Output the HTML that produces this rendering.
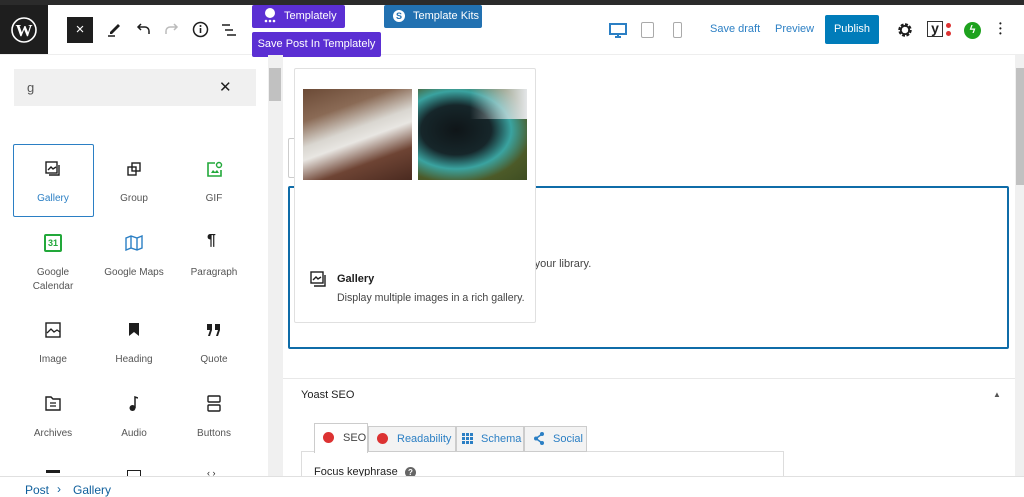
<!DOCTYPE html>
<html><head><meta charset="utf-8"><style>
*{box-sizing:border-box;margin:0;padding:0}
body{width:1024px;height:496px;overflow:hidden;background:#fff;font-family:"Liberation Sans",sans-serif;position:relative;color:#1e1e1e}
.a{position:absolute}
.lbl{position:absolute;font-size:10px;color:#555;text-align:center;width:80px;line-height:14px}
svg{display:block}
</style></head><body>
<div class="a" style="left:0;top:0;width:1024px;height:5px;background:#2b2b2b"></div>
<div class="a" style="left:0;top:5px;width:1024px;height:50px;background:#fff;border-bottom:1px solid #eee"></div>
<div class="a" style="left:0;top:5px;width:48px;height:49px;background:#1e1e1e"></div>
<svg class="a" style="left:11px;top:17px" width="26" height="26" viewBox="0 0 26 26"><circle cx="13" cy="13" r="12" fill="none" stroke="#fff" stroke-width="1.6"/><text x="13" y="19" font-size="17" font-family="Liberation Serif" font-weight="bold" fill="#fff" text-anchor="middle">W</text></svg>
<div class="a" style="left:67px;top:17px;width:26px;height:26px;background:#1e1e1e;color:#fff;font-size:15px;text-align:center;line-height:26px">×</div>
<svg class="a" style="left:105px;top:20px" width="18" height="18" viewBox="0 0 18 18"><path d="M5 12L13 4l2 2-8 8H5z" fill="#1e1e1e"/><path d="M3 16h7" stroke="#1e1e1e" stroke-width="1.5"/></svg>
<svg class="a" style="left:135px;top:22px" width="16" height="14" viewBox="0 0 16 14"><path d="M14 12V9a4 4 0 0 0-4-4H3M6 2L3 5l3 3" fill="none" stroke="#1e1e1e" stroke-width="1.5"/></svg>
<svg class="a" style="left:164px;top:22px" width="16" height="14" viewBox="0 0 16 14"><path d="M2 12V9a4 4 0 0 1 4-4h7M10 2l3 3-3 3" fill="none" stroke="#bbb" stroke-width="1.5"/></svg>
<svg class="a" style="left:192px;top:21px" width="17" height="17" viewBox="0 0 17 17"><circle cx="8.5" cy="8.5" r="7" fill="none" stroke="#1e1e1e" stroke-width="1.5"/><path d="M8.5 7v5" stroke="#1e1e1e" stroke-width="1.6"/><circle cx="8.5" cy="5" r="1" fill="#1e1e1e"/></svg>
<svg class="a" style="left:221px;top:23px" width="16" height="14" viewBox="0 0 16 14"><path d="M1 2h8M4 7h8M6 12h9" stroke="#1e1e1e" stroke-width="1.5"/></svg>
<div class="a" style="left:252px;top:5px;width:93px;height:23px;background:#5b2fd3;border-radius:2px;color:#fff;font-size:11px;line-height:23px;padding-left:32px">Templately</div>
<svg class="a" style="left:263px;top:7px" width="14" height="16" viewBox="0 0 14 16"><circle cx="7" cy="6" r="5" fill="#fff"/><circle cx="3" cy="14" r="1.3" fill="#fff"/><circle cx="7" cy="14" r="1.3" fill="#fff"/><circle cx="11" cy="14" r="1.3" fill="#fff"/></svg>
<div class="a" style="left:252px;top:32px;width:129px;height:25px;background:#5b2fd3;border-radius:2px;color:#fff;font-size:11px;line-height:25px;text-align:center">Save Post In Templately</div>
<div class="a" style="left:384px;top:5px;width:98px;height:23px;background:#2271b1;border-radius:2px;color:#fff;font-size:11px;line-height:23px;padding-left:29px">Template Kits</div>
<div class="a" style="left:393px;top:10px;width:12px;height:12px;border-radius:50%;background:#fff;color:#2271b1;font-size:9px;line-height:12px;text-align:center;font-weight:bold">S</div>
<svg class="a" style="left:609px;top:23px" width="18" height="15" viewBox="0 0 18 15"><rect x="1" y="1" width="16" height="10" fill="none" stroke="#2b7fc4" stroke-width="2"/><path d="M6 14h6M9 11v3" stroke="#2b7fc4" stroke-width="2"/></svg>
<div class="a" style="left:641px;top:22px;width:13px;height:16px;border:1.5px solid #aaa;border-radius:2px"></div>
<div class="a" style="left:673px;top:22px;width:9px;height:16px;border:1.5px solid #aaa;border-radius:2px"></div>
<div class="a" style="left:710px;top:23px;font-size:11px;color:#2b7fc4">Save draft</div>
<div class="a" style="left:775px;top:23px;font-size:11px;color:#2b7fc4">Preview</div>
<div class="a" style="left:825px;top:15px;width:54px;height:29px;background:#007cba;border-radius:2px;color:#fff;font-size:11px;line-height:29px;text-align:center">Publish</div>
<svg class="a" style="left:897px;top:22px" width="16" height="16" viewBox="0 0 16 16"><circle cx="8" cy="8" r="5" fill="none" stroke="#1e1e1e" stroke-width="3.5" stroke-dasharray="2.6 1.3"/><circle cx="8" cy="8" r="4.2" fill="none" stroke="#1e1e1e" stroke-width="1.8"/></svg>
<div class="a" style="left:927px;top:21px;width:16px;height:16px;border:1.5px solid #333;font-size:14px;line-height:13px;text-align:center;font-weight:bold">y</div>
<div class="a" style="left:946px;top:23px;width:5px;height:5px;border-radius:50%;background:#dc3232"></div>
<div class="a" style="left:946px;top:31px;width:5px;height:5px;border-radius:50%;background:#dc3232"></div>
<div class="a" style="left:964px;top:22px;width:17px;height:17px;border-radius:50%;background:#1ea21e;color:#fff;font-size:11px;line-height:17px;text-align:center;font-weight:bold">ϟ</div>
<div class="a" style="left:999px;top:21px;width:3px;line-height:5px;font-size:8px">•<br>•<br>•</div>

<!-- sidebar -->
<div class="a" style="left:268px;top:55px;width:15px;height:421px;background:#f0f0f0"></div>
<div class="a" style="left:269px;top:68px;width:12px;height:33px;background:#c1c1c1"></div>
<div class="a" style="left:14px;top:69px;width:242px;height:37px;background:#f0f0f0"></div>
<div class="a" style="left:27px;top:80px;font-size:13px;color:#555">g</div>
<div class="a" style="left:219px;top:78px;font-size:15px;color:#1e1e1e">✕</div>
<div class="a" style="left:13px;top:144px;width:81px;height:73px;border:1.5px solid #2b7fc4;border-radius:2px"></div>

<svg class="a" style="left:45px;top:161px" width="16" height="16" viewBox="0 0 16 16"><rect x="1" y="1" width="11" height="11" fill="none" stroke="#1e1e1e" stroke-width="1.4"/><path d="M3 9l3-3 2 2 3-2M14 4v10H4" fill="none" stroke="#1e1e1e" stroke-width="1.4"/></svg>
<div class="lbl" style="left:13px;top:192px;color:#2b7fc4">Gallery</div>
<svg class="a" style="left:127px;top:162px" width="14" height="14" viewBox="0 0 14 14"><rect x="1" y="5" width="8" height="8" fill="none" stroke="#1e1e1e" stroke-width="1.4"/><rect x="5" y="1" width="8" height="8" fill="none" stroke="#1e1e1e" stroke-width="1.4"/></svg>
<div class="lbl" style="left:94px;top:192px">Group</div>
<svg class="a" style="left:206px;top:161px" width="17" height="17" viewBox="0 0 17 17"><path d="M9 2H2v13h13V9" fill="none" stroke="#22a83a" stroke-width="1.6"/><circle cx="13" cy="4" r="2.5" fill="none" stroke="#22a83a" stroke-width="1.4"/><path d="M5 12l2-3 2 2 2-2 2 3z" fill="#22a83a"/></svg>
<div class="lbl" style="left:174px;top:192px">GIF</div>

<div class="a" style="left:44px;top:234px;width:18px;height:18px;border:2px solid #22a83a;border-radius:2px;color:#22a83a;font-size:9px;font-weight:bold;text-align:center;line-height:15px">31</div>
<div class="lbl" style="left:13px;top:266px">Google<br>Calendar</div>
<svg class="a" style="left:125px;top:235px" width="18" height="16" viewBox="0 0 18 16"><path d="M1 3l5-2 6 2 5-2v12l-5 2-6-2-5 2zM6 1v12M12 3v12" fill="none" stroke="#2b7fc4" stroke-width="1.4"/></svg>
<div class="lbl" style="left:94px;top:266px">Google Maps</div>
<div class="a" style="left:207px;top:232px;font-size:16px;font-weight:bold">¶</div>
<div class="lbl" style="left:174px;top:266px">Paragraph</div>

<svg class="a" style="left:45px;top:322px" width="16" height="16" viewBox="0 0 16 16"><rect x="1" y="1" width="14" height="14" fill="none" stroke="#1e1e1e" stroke-width="1.4"/><path d="M2 11l4-4 3 3 3-2 3 2" fill="none" stroke="#1e1e1e" stroke-width="1.3"/></svg>
<div class="lbl" style="left:13px;top:353px">Image</div>
<svg class="a" style="left:129px;top:323px" width="10" height="13" viewBox="0 0 10 13"><path d="M0 0h10v13l-5-4-5 4z" fill="#1e1e1e"/></svg>
<div class="lbl" style="left:94px;top:353px">Heading</div>
<svg class="a" style="left:207px;top:324px" width="14" height="12" viewBox="0 0 14 12"><path d="M0 0h5v6l-2 6H1l2-6H0zM8 0h5v6l-2 6H9l2-6H8z" fill="#1e1e1e"/></svg>
<div class="lbl" style="left:174px;top:353px">Quote</div>

<svg class="a" style="left:45px;top:396px" width="16" height="15" viewBox="0 0 16 15"><path d="M1 1h5l2 2h7v11H1z" fill="none" stroke="#1e1e1e" stroke-width="1.4"/><path d="M5 7h6M5 10h6" stroke="#1e1e1e" stroke-width="1.3"/></svg>
<div class="lbl" style="left:13px;top:427px">Archives</div>
<svg class="a" style="left:129px;top:396px" width="9" height="15" viewBox="0 0 9 15"><path d="M6 12V1l3 1" fill="none" stroke="#1e1e1e" stroke-width="1.5"/><circle cx="3.5" cy="12" r="3" fill="#1e1e1e"/></svg>
<div class="lbl" style="left:94px;top:427px">Audio</div>
<svg class="a" style="left:207px;top:395px" width="14" height="17" viewBox="0 0 14 17"><rect x="1" y="1" width="12" height="6" rx="1" fill="none" stroke="#1e1e1e" stroke-width="1.4"/><rect x="1" y="10" width="12" height="6" rx="1" fill="none" stroke="#1e1e1e" stroke-width="1.4"/></svg>
<div class="lbl" style="left:174px;top:427px">Buttons</div>
<div class="a" style="left:46px;top:470px;width:14px;height:6px;border-top:3px solid #1e1e1e"></div>
<div class="a" style="left:127px;top:470px;width:14px;height:6px;border:1.5px solid #1e1e1e;border-bottom:none"></div>
<div class="a" style="left:207px;top:468px;font-size:9px">‹ ›</div>

<!-- content -->
<div class="a" style="left:1015px;top:55px;width:9px;height:421px;background:#f0f0f0"></div>
<div class="a" style="left:1016px;top:68px;width:8px;height:117px;background:#c1c1c1"></div>
<div class="a" style="left:288px;top:138px;width:40px;height:40px;border:1px solid #ccc;border-radius:2px"></div>
<div class="a" style="left:288px;top:186px;width:721px;height:163px;border:2px solid #0f6ca8;border-radius:2px"></div>
<div class="a" style="left:523px;top:258px;font-size:11px;color:#444">in your library.</div>
<div class="a" style="left:283px;top:378px;width:732px;height:1px;background:#e8e8e8"></div>
<div class="a" style="left:301px;top:389px;font-size:11px;color:#1e1e1e">Yoast SEO</div>
<div class="a" style="left:993px;top:390px;font-size:8px;color:#555">▲</div>
<div class="a" style="left:301px;top:451px;width:483px;height:30px;border:1px solid #ddd"></div>
<div class="a" style="left:314px;top:423px;width:54px;height:30px;background:#fff;border:1px solid #ccc;border-bottom:none"></div>
<div class="a" style="left:323px;top:432px;width:11px;height:11px;border-radius:50%;background:#dc3232"></div>
<div class="a" style="left:343px;top:432px;font-size:11px;color:#444">SEO</div>
<div class="a" style="left:368px;top:426px;width:88px;height:26px;background:#f3f3f3;border:1px solid #ccc"></div>
<div class="a" style="left:377px;top:433px;width:11px;height:11px;border-radius:50%;background:#dc3232"></div>
<div class="a" style="left:397px;top:433px;font-size:11px;color:#2b7fc4">Readability</div>
<div class="a" style="left:456px;top:426px;width:68px;height:26px;background:#f3f3f3;border:1px solid #ccc"></div>
<svg class="a" style="left:462px;top:433px" width="12" height="11" viewBox="0 0 12 11"><g fill="#2b7fc4"><rect x="0" y="0" width="3" height="3"/><rect x="4" y="0" width="3" height="3"/><rect x="8" y="0" width="3" height="3"/><rect x="0" y="4" width="3" height="3"/><rect x="4" y="4" width="3" height="3"/><rect x="8" y="4" width="3" height="3"/><rect x="0" y="8" width="3" height="3"/><rect x="4" y="8" width="3" height="3"/><rect x="8" y="8" width="3" height="3"/></g></svg>
<div class="a" style="left:481px;top:433px;font-size:11px;color:#2b7fc4">Schema</div>
<div class="a" style="left:524px;top:426px;width:63px;height:26px;background:#f3f3f3;border:1px solid #ccc"></div>
<svg class="a" style="left:533px;top:432px" width="12" height="13" viewBox="0 0 12 13"><path d="M9 2L3 6.5 9 11" stroke="#2b7fc4" stroke-width="1.5" fill="none"/><circle cx="9" cy="2" r="2" fill="#2b7fc4"/><circle cx="3" cy="6.5" r="2" fill="#2b7fc4"/><circle cx="9" cy="11" r="2" fill="#2b7fc4"/></svg>
<div class="a" style="left:553px;top:433px;font-size:11px;color:#2b7fc4">Social</div>
<div class="a" style="left:314px;top:466px;font-size:11px;color:#1e1e1e">Focus keyphrase</div>
<div class="a" style="left:405px;top:467px;width:11px;height:11px;border-radius:50%;background:#666;color:#fff;font-size:8px;text-align:center;line-height:11px;font-weight:bold">?</div>

<!-- popover -->
<div class="a" style="left:294px;top:68px;width:242px;height:255px;background:#fff;border:1px solid #e0e0e0;border-radius:2px"></div>
<div class="a" style="left:303px;top:89px;width:109px;height:91px;background:linear-gradient(160deg,#6b4a36 0%,#8a6a55 25%,#d9d6d0 45%,#e8e6e2 55%,#6e4434 75%,#4a2a20 100%)"></div>
<div class="a" style="left:418px;top:89px;width:109px;height:91px;background:radial-gradient(ellipse at 35% 45%,#0f1518 0%,#16262a 35%,#3aa3a0 55%,#4c5a28 75%,#3e4d22 100%)"></div>
<div class="a" style="left:470px;top:89px;width:57px;height:30px;background:linear-gradient(90deg,rgba(200,205,210,0),#e4e6e8)"></div>
<svg class="a" style="left:310px;top:271px" width="17" height="16" viewBox="0 0 17 16"><rect x="1" y="1" width="12" height="11" fill="none" stroke="#1e1e1e" stroke-width="1.4"/><path d="M3 9l3-3 2 2 3-2M15 4v11H4" fill="none" stroke="#1e1e1e" stroke-width="1.4"/></svg>
<div class="a" style="left:337px;top:273px;font-size:11px;font-weight:bold;color:#1e1e1e">Gallery</div>
<div class="a" style="left:337px;top:292px;font-size:10.6px;color:#444">Display multiple images in a rich gallery.</div>

<!-- footer -->
<div class="a" style="left:0;top:476px;width:1024px;height:20px;background:#fff;border-top:1px solid #e0e0e0"></div>
<div class="a" style="left:25px;top:483px;font-size:12px;color:#0f5f9c">Post</div>
<div class="a" style="left:57px;top:482px;font-size:12px;color:#0f5f9c">›</div>
<div class="a" style="left:73px;top:483px;font-size:12px;color:#0f5f9c">Gallery</div>
</body></html>
